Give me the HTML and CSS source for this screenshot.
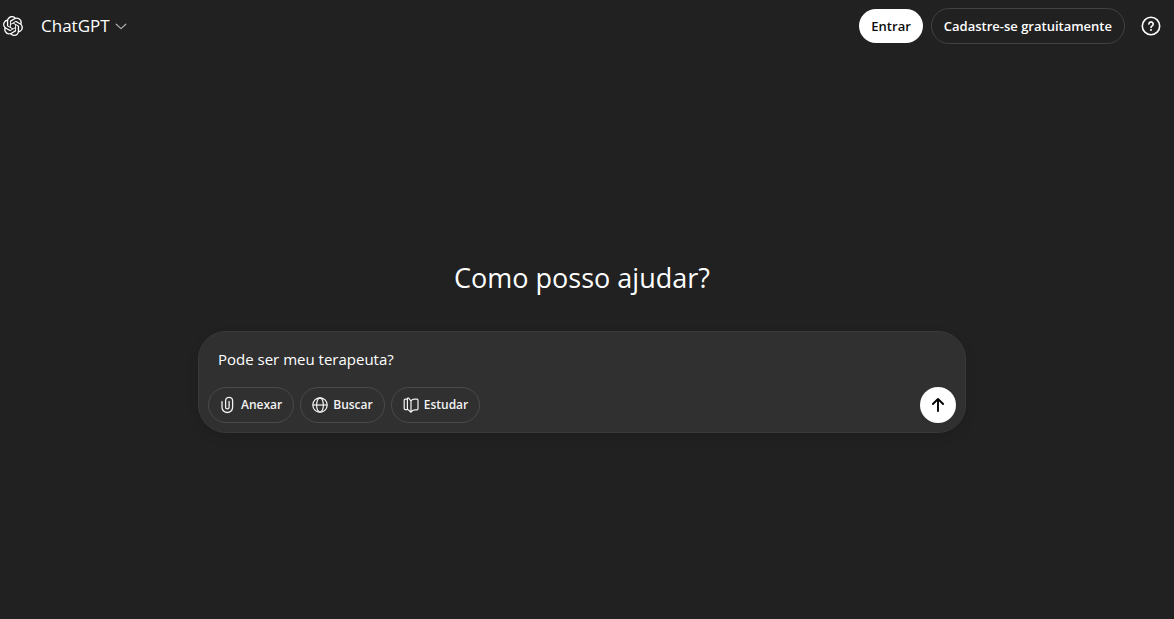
FILE: index.html
```html
<!DOCTYPE html>
<html lang="pt-BR">

<head>
    <meta charset="UTF-8">
    <meta name="viewport" content="width=device-width, initial-scale=1.0">
    <title>ChatGPT</title>
    <link rel="stylesheet" href="styles.css">
</head>

<body>
    <header class="topbar">
        <a class="logo" href="#" aria-label="Início">
            <svg width="20" height="20" viewBox="0 0 24 24" fill="currentColor"><path d="M22.2819 9.8211a5.9847 5.9847 0 0 0-.5157-4.9108 6.0462 6.0462 0 0 0-6.5098-2.9A6.0651 6.0651 0 0 0 4.9807 4.1818a5.9847 5.9847 0 0 0-3.9977 2.9 6.0462 6.0462 0 0 0 .7427 7.0966 5.98 5.98 0 0 0 .511 4.9107 6.051 6.051 0 0 0 6.5146 2.9001A5.9847 5.9847 0 0 0 13.2599 24a6.0557 6.0557 0 0 0 5.7718-4.2058 5.9894 5.9894 0 0 0 3.9977-2.9001 6.0557 6.0557 0 0 0-.7475-7.073zm-9.022 12.6081a4.4755 4.4755 0 0 1-2.8764-1.0408l.1419-.0804 4.7783-2.7582a.7948.7948 0 0 0 .3927-.6813v-6.7369l2.02 1.1686a.071.071 0 0 1 .038.052v5.5826a4.504 4.504 0 0 1-4.4945 4.4944zm-9.6607-4.1254a4.4708 4.4708 0 0 1-.5346-3.0137l.142.0852 4.783 2.7582a.7712.7712 0 0 0 .7806 0l5.8428-3.3685v2.3324a.0804.0804 0 0 1-.0332.0615L9.74 19.9502a4.4992 4.4992 0 0 1-6.1408-1.6464zM2.3408 7.8956a4.485 4.485 0 0 1 2.3655-1.9728V11.6a.7664.7664 0 0 0 .3879.6765l5.8144 3.3543-2.0201 1.1685a.0757.0757 0 0 1-.071 0l-4.8303-2.7865A4.504 4.504 0 0 1 2.3408 7.872zm16.5963 3.8558L13.1038 8.364 15.1192 7.2a.0757.0757 0 0 1 .071 0l4.8303 2.7913a4.4944 4.4944 0 0 1-.6765 8.1042v-5.6772a.79.79 0 0 0-.407-.667zm2.0107-3.0231l-.142-.0852-4.7735-2.7818a.7759.7759 0 0 0-.7854 0L9.409 9.2297V6.8974a.0662.0662 0 0 1 .0284-.0615l4.8303-2.7866a4.4992 4.4992 0 0 1 6.6802 4.66zM8.3065 12.863l-2.02-1.1638a.0804.0804 0 0 1-.038-.0567V6.0742a4.4992 4.4992 0 0 1 7.3757-3.4537l-.142.0805L8.704 5.459a.7948.7948 0 0 0-.3927.6813zm1.0976-2.3654l2.602-1.4998 2.6069 1.4998v2.9994l-2.5974 1.4997-2.6067-1.4997Z"/></svg>
        </a>
        <button type="button" class="model">
            ChatGPT
            <svg width="12" height="12" viewBox="0 0 12 12" fill="none" stroke="currentColor" stroke-width="1.2" stroke-linecap="round" stroke-linejoin="round"><path d="M1.2 4.2 6 8.6l4.8-4.4"/></svg>
        </button>

        <nav class="actions">
            <button type="button" class="btn btn-login">Entrar</button>
            <button type="button" class="btn btn-signup">Cadastre-se gratuitamente</button>
            <button type="button" class="help" aria-label="Ajuda">
                <svg width="20" height="20" viewBox="0 0 20 20" fill="none" stroke="currentColor" stroke-width="1.6" stroke-linecap="round"><circle cx="10" cy="10" r="8.7"/><path d="M7.9 8.1a2.15 2.15 0 1 1 3.3 1.8c-.8.5-1.2.8-1.2 1.5"/><circle cx="10" cy="13.9" r="1" fill="currentColor" stroke="none"/></svg>
            </button>
        </nav>
    </header>

    <main class="content">
        <h1>Como posso ajudar?</h1>

        <form class="composer">
            <input type="text" class="prompt" aria-label="Mensagem" value="Pode ser meu terapeuta?">
            <div class="tools">
                <button type="button" class="chip">
                    <svg width="18" height="18" viewBox="0 0 18 18" fill="none" stroke="currentColor" stroke-width="1.3" stroke-linecap="round"><path d="M3 5.6v5.6a5.3 5.3 0 0 0 10.6 0V4.8a3.5 3.5 0 0 0-7 0v6.4a1.75 1.75 0 0 0 3.5 0V5.4"/></svg>
                    Anexar
                </button>
                <button type="button" class="chip">
                    <svg width="18" height="18" viewBox="0 0 18 18" fill="none" stroke="currentColor" stroke-width="1.2"><circle cx="9" cy="9" r="7.2"/><ellipse cx="9" cy="9" rx="3.4" ry="7.2"/><path d="M1.8 9h14.4"/></svg>
                    Buscar
                </button>
                <button type="button" class="chip">
                    <svg width="18" height="18" viewBox="0 0 18 18" fill="none" stroke="currentColor" stroke-width="1.2" stroke-linecap="round" stroke-linejoin="round"><path d="M5.4 13.6H3.2a1 1 0 0 1-1-1V4.2a1 1 0 0 1 1-1h2.2M9 4.8v11.4M9 4.8 6.6 2.2c-.5-.5-1.2-.2-1.2.5v9.6c0 .5.1.8.4 1.1L9 16.2c1-1.7 2.2-2.4 3.8-2.4H15a1 1 0 0 0 1-1V4.2a1 1 0 0 0-1-1h-2.2C11 3.2 9.8 3.6 9 4.8Z"/></svg>
                    Estudar
                </button>
                <button type="submit" class="send" aria-label="Enviar">
                    <svg width="20" height="20" viewBox="0 0 20 20" fill="none" stroke="currentColor" stroke-width="1.9" stroke-linecap="round" stroke-linejoin="round"><path d="M10 16V4.2M4.9 9 10 4l5.1 5"/></svg>
                </button>
            </div>
        </form>
    </main>
</body>

</html>
```
FILE: styles.css
```css
* {
    box-sizing: border-box;
}

body {
    display: flex;
    flex-direction: column;
    min-height: 100vh;
    margin: 0;
    background-color: #212121;
    color: #fff;
    font-family: "Segoe UI", "Open Sans", "Noto Sans", sans-serif;
}

button,
input {
    margin: 0;
    padding: 0;
    border: none;
    background: none;
    color: inherit;
    font-family: inherit;
}

button {
    cursor: pointer;
}

svg {
    display: block;
    flex-shrink: 0;
}

.topbar {
    display: flex;
    align-items: center;
    height: 52px;
    padding: 0 13px 0 3px;
}

.logo {
    color: #fff;
}

.model {
    display: flex;
    align-items: center;
    gap: 5px;
    margin-left: 18px;
    font-size: 17px;
    line-height: 28px;
}

.model svg {
    color: #afafaf;
}

.actions {
    display: flex;
    align-items: center;
    margin-left: auto;
}

.btn {
    padding: 0 12px;
    border-radius: 18px;
    font-size: 13px;
    font-weight: 600;
    white-space: nowrap;
}

.btn-login {
    height: 34px;
    margin-right: 8px;
    background-color: #fff;
    color: #0d0d0d;
}

.btn-signup {
    height: 36px;
    margin-right: 16px;
    border: 1px solid #424242;
}

.content {
    display: flex;
    flex: 1;
    flex-direction: column;
    align-items: center;
    justify-content: center;
    padding: 21px 26px 0 16px;
}

h1 {
    margin: 0 0 35px;
    font-size: 27px;
    font-weight: 400;
    line-height: 36px;
}

.composer {
    width: 100%;
    max-width: 768px;
    padding: 9px;
    border: 1px solid #393939;
    border-radius: 28px;
    background-color: #303030;
    box-shadow: 0 4px 12px rgba(0, 0, 0, 0.1);
}

.prompt {
    display: block;
    width: 100%;
    height: 36px;
    margin-bottom: 10px;
    padding: 0 10px;
    font-size: 15px;
    outline: none;
}

.tools {
    display: flex;
    align-items: center;
    gap: 6px;
}

.chip {
    display: flex;
    align-items: center;
    gap: 4px;
    height: 36px;
    padding: 0 11px 0 10px;
    border: 1px solid #4a4a4a;
    border-radius: 18px;
    color: #f3f3f3;
    font-size: 12px;
    font-weight: 600;
}

.send {
    display: flex;
    align-items: center;
    justify-content: center;
    width: 36px;
    height: 36px;
    margin-left: auto;
    border-radius: 50%;
    background-color: #fff;
    color: #000;
}
```
